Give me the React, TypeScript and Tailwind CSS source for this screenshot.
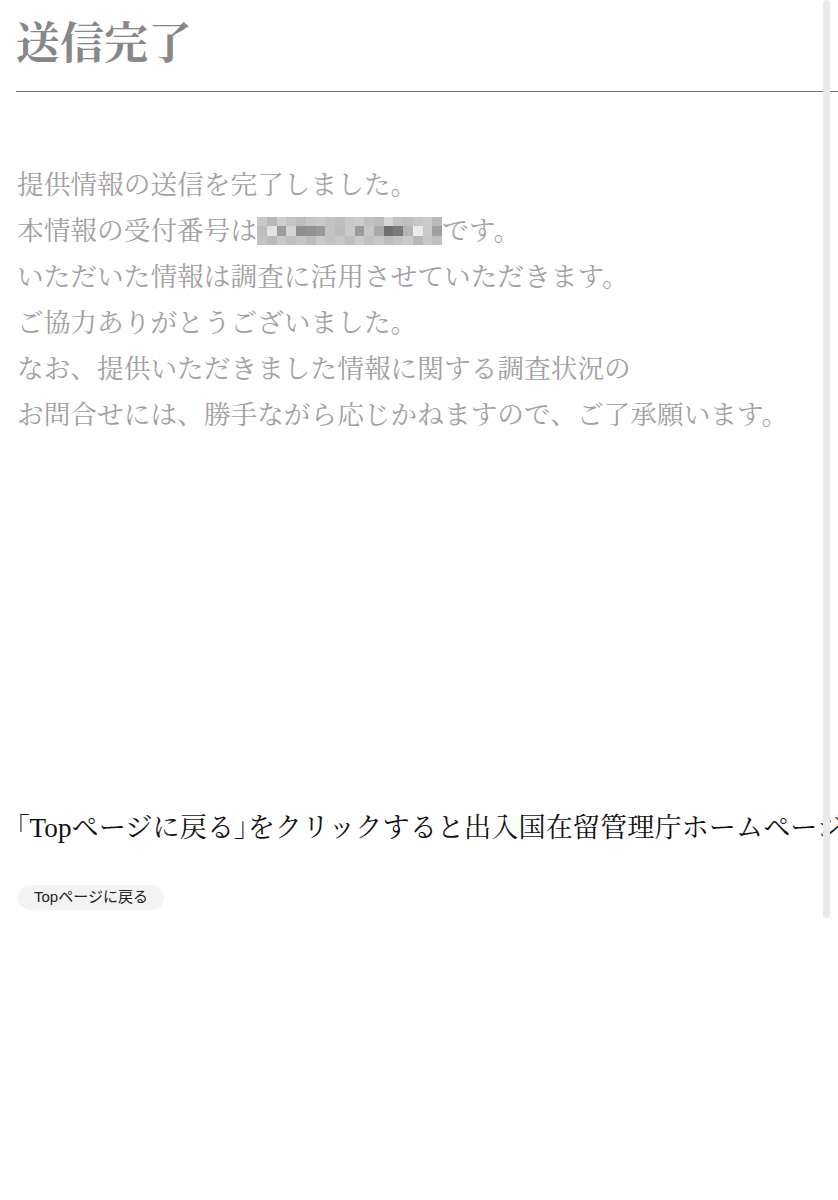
const serif =
  '"Liberation Serif", "Noto Serif CJK JP", "Noto Sans CJK JP", serif';
const sans = '"Liberation Sans", "Noto Sans CJK JP", sans-serif';

// pixelated receipt number, 3 rows x 19 cells
const mosaic = [
  ["#c9c9c9", "#b8b8b8", "#cfcfcf", "#c4c4c4", "#bdbdbd", "#c6c6c6", "#cacaca", "#c2c2c2", "#bebebe", "#c8c8c8", "#cdcdcd", "#c0c0c0", "#bcbcbc", "#d8d8d8", "#c3c3c3", "#bfbfbf", "#c7c7c7", "#cbcbcb", "#b9b9b9"],
  ["#bdbdbd", "#e2e2e2", "#9c9c9c", "#d4d4d4", "#8f8f8f", "#929292", "#999999", "#c4c4c4", "#bbbbbb", "#cacaca", "#9a9a9a", "#c6c6c6", "#aaaaaa", "#6f6f6f", "#7a7a7a", "#b4b4b4", "#ebebeb", "#c9c9c9", "#a0a0a0"],
  ["#c2c2c2", "#bababa", "#c8c8c8", "#c0c0c0", "#c5c5c5", "#bdbdbd", "#c9c9c9", "#c3c3c3", "#c6c6c6", "#bfbfbf", "#cbcbcb", "#c1c1c1", "#c7c7c7", "#bcbcbc", "#c4c4c4", "#cacaca", "#b7b7b7", "#c6c6c6", "#c0c0c0"],
];

function Mosaic() {
  return (
    <span className="flex flex-col w-[185px] h-[28px] shrink-0">
      {mosaic.map((row, i) => (
        <span key={i} className="flex flex-1">
          {row.map((c, j) => (
            <span key={j} className="flex-1" style={{ backgroundColor: c }} />
          ))}
        </span>
      ))}
    </span>
  );
}

const lines = [
  "いただいた情報は調査に活用させていただきます。",
  "ご協力ありがとうございました。",
  "なお、提供いただきました情報に関する調査状況の",
  "お問合せには、勝手ながら応じかねますので、ご了承願います。",
];

export default function App() {
  return (
    <div className="relative min-h-[1200px] bg-white overflow-hidden">
      <div className="pl-[16px]">
        <h1
          className="pt-[16px] text-[44px] leading-[58px] font-bold text-[#878787]"
          style={{ fontFamily: serif }}
        >
          送信完了
        </h1>
        <div className="mt-[17px] h-px bg-[#767676]" />

        <div
          className="mt-[70px] pl-px text-[26.7px] leading-[46px] text-[#a0a0a0]"
          style={{ fontFamily: serif }}
        >
          <p className="h-[46px]">提供情報の送信を完了しました。</p>
          <p className="h-[46px] flex items-center">
            <span>本情報の受付番号は</span>
            <Mosaic />
            <span>です。</span>
          </p>
          {lines.map((l) => (
            <p key={l} className="h-[46px]">
              {l}
            </p>
          ))}
        </div>

        <p
          className="mt-[370px] text-[27.2px] leading-[40px] text-[#111] whitespace-nowrap"
          style={{ fontFamily: serif }}
        >
          <span className="[font-feature-settings:'halt']">「</span>
          Topページに戻る
          <span className="[font-feature-settings:'halt']">」</span>
          をクリックすると出入国在留管理庁ホームページへ移動します。
        </p>

        <button
          className="mt-[37px] ml-[2px] h-[25px] px-[16px] rounded-full bg-[#f3f3f3] text-[15px] text-[#222]"
          style={{ fontFamily: sans }}
        >
          Topページに戻る
        </button>
      </div>

      <div className="absolute top-0 left-[823px] w-[7px] h-[918px] rounded-full bg-[#e9e9e9]" />
    </div>
  );
}
